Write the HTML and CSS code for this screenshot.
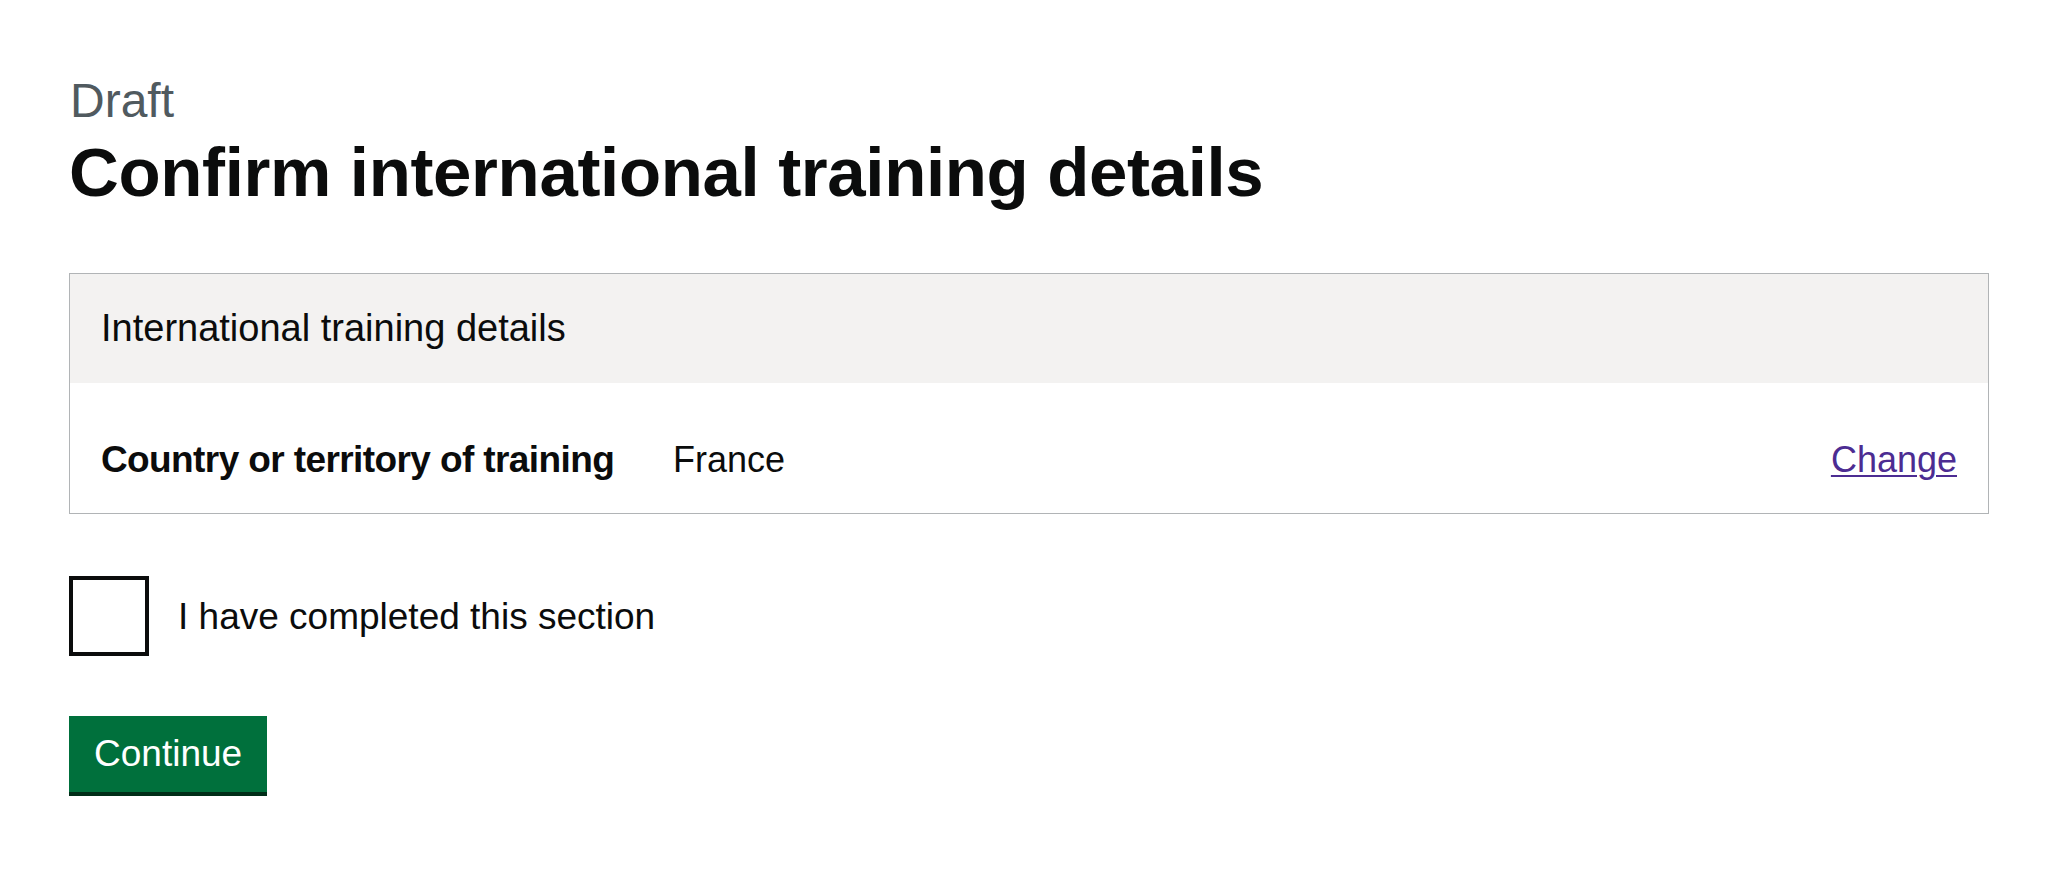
FILE: index.html
```html
<!DOCTYPE html>
<html lang="en">
<head>
<meta charset="utf-8">
<title>Confirm international training details</title>
<link rel="stylesheet" href="styles.css">
</head>
<body>
<main class="page">
  <span class="caption">Draft</span>
  <h1 class="heading">Confirm international training details</h1>

  <section class="card">
    <div class="card-title">
      <h2 class="card-title-text">International training details</h2>
    </div>
    <dl class="summary">
      <div class="summary-row">
        <dt class="summary-key">Country or territory of training</dt>
        <dd class="summary-value">France</dd>
        <dd class="summary-actions"><a class="link" href="#">Change</a></dd>
      </div>
    </dl>
  </section>

  <div class="checkbox">
    <span class="checkbox-box"></span>
    <label class="checkbox-label">I have completed this section</label>
  </div>

  <button class="button" type="button">Continue</button>
</main>
</body>
</html>
```

FILE: styles.css
```css
html, body {
  margin: 0;
  padding: 0;
  background: #ffffff;
}

body {
  font-family: "Liberation Sans", Arial, sans-serif;
  color: #0b0c0c;
}

.page {
  width: 1920px;
  margin-left: 69px;
  padding-top: 76px;
  display: flex;
  flex-direction: column;
  align-items: flex-start;
}

.caption {
  display: block;
  font-size: 48px;
  line-height: 50px;
  color: #505a5f;
  margin-left: 1px;
}

.heading {
  margin: 9px 0 0 0;
  font-size: 69px;
  line-height: 76px;
  font-weight: 700;
  letter-spacing: -0.35px;
}

.card {
  align-self: stretch;
  margin-top: 62px;
  border: 1px solid #b1b4b6;
}

.card-title {
  background: #f3f2f1;
  padding: 32px 31px 32px 31px;
}

.card-title-text {
  margin: 0;
  font-size: 38px;
  line-height: 45px;
  font-weight: 400;
}

.summary {
  margin: 0;
  padding: 54px 31px 31px 31px;
}

.summary-row {
  display: grid;
  grid-template-columns: 572px 1fr auto;
  align-items: baseline;
}

.summary-key,
.summary-value,
.summary-actions {
  margin: 0;
  font-size: 37px;
  line-height: 45px;
}

.summary-key {
  font-weight: 700;
  letter-spacing: -0.6px;
}

.summary-value {
  font-size: 36px;
}

.summary-actions {
  font-size: 36px;
  text-align: right;
}

.link {
  color: #4c2c92;
  text-decoration: underline;
  text-decoration-thickness: 2px;
  text-underline-offset: 3px;
}

.checkbox {
  margin-top: 62px;
  display: flex;
  align-items: center;
  gap: 29px;
}

.checkbox-box {
  box-sizing: border-box;
  width: 80px;
  height: 80px;
  border: 4px solid #0b0c0c;
  background: #ffffff;
}

.checkbox-label {
  font-size: 37px;
  line-height: 45px;
}

.button {
  box-sizing: border-box;
  margin-top: 60px;
  height: 80px;
  padding: 0 25px;
  border: 0;
  border-bottom: 4px solid #002d18;
  border-radius: 0;
  background: #00703c;
  color: #ffffff;
  font-family: "Liberation Sans", Arial, sans-serif;
  font-size: 37px;
  line-height: 76px;
  cursor: pointer;
}
```
